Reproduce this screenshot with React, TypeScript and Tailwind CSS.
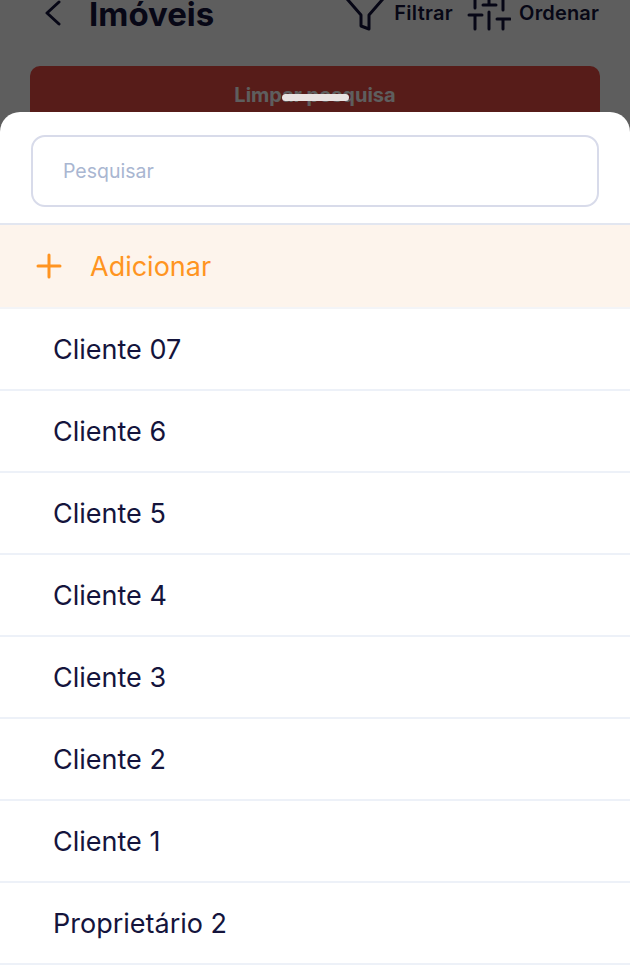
const rows = ["Cliente 07", "Cliente 6", "Cliente 5", "Cliente 4", "Cliente 3", "Cliente 2", "Cliente 1", "Proprietário 2"]

export default function App() {
  return (
    <div className="relative h-[975px] w-[630px] overflow-hidden bg-white font-['Inter',sans-serif] text-[#14143c]">
      {/* page behind the sheet */}
      <div className="flex h-[26px] items-center pl-[45px] pr-[31px]">
        <svg width="16" height="26" viewBox="0 0 16 26" fill="none" stroke="currentColor" strokeWidth="3" strokeLinecap="round" strokeLinejoin="round" className="mr-[28px]">
          <path d="M14 2 L2 13 L14 24" />
        </svg>
        <span className="mt-[2px] text-[33px] font-bold leading-[26px]">Imóveis</span>
        <div className="ml-auto flex items-center">
          <svg width="36" height="34" viewBox="0 0 36 34" fill="none" stroke="currentColor" strokeWidth="3" strokeLinecap="round" strokeLinejoin="round" className="mt-[8px] overflow-visible">
            <path d="M-1.5 -4 L15 15 L15 26 L23 29 L23 15 L39.5 -4" />
          </svg>
          <span className="ml-[12px] text-[20px] font-semibold leading-none tracking-[0.3px]">Filtrar</span>
          <svg width="44" height="34" viewBox="0 0 44 34" fill="none" stroke="currentColor" strokeWidth="3" strokeLinecap="round" className="ml-[14px] mt-[8px]">
            <path d="M8 -4 V8 M8 15 V29 M2 15 H15 M22 -4 V5 M22 12 V29 M16 5 H29 M36 -4 V10 M36 19 V29 M30 19 H43" />
          </svg>
          <span className="ml-[8px] text-[20px] font-semibold leading-none tracking-[0.15px]">Ordenar</span>
        </div>
      </div>
      <button className="ml-[30px] mt-[40px] flex h-[58px] w-[570px] items-center justify-center rounded-[10px] bg-[#eb4e44] text-[20px] font-bold text-white">
        Limpar pesquisa
      </button>

      {/* dim overlay */}
      <div className="absolute inset-0 bg-black/[0.63]" />
      <div className="absolute left-[282px] top-[94px] h-[7px] w-[67px] rounded-full bg-[#e8e2e1]" />

      {/* bottom sheet */}
      <div className="absolute inset-x-0 bottom-0 top-[112px] rounded-t-[20px] bg-white">
        <div className="px-[31px] pb-[16px] pt-[23px]">
          <div className="flex h-[72px] items-center rounded-[14px] border-2 border-[#d8dbea] pl-[30px] pt-[2px] text-[19.5px] text-[#a9b6d1]">
            Pesquisar
          </div>
        </div>
        <div className="flex h-[86px] items-center border-y-2 border-t-[#e2e6f0] border-b-[#f3f4f7] bg-[#fdf4ec] pl-[36px] text-[27px] text-[#ff9421]">
          <svg width="26" height="26" viewBox="0 0 26 26" fill="none" stroke="currentColor" strokeWidth="3" strokeLinecap="round">
            <path d="M13 2 V24 M2 13 H24" />
          </svg>
          <span className="ml-[28px] pt-[2px]">Adicionar</span>
        </div>
        {rows.map((name) => (
          <div key={name} className="flex h-[82px] items-center border-b-2 border-[#edf1f8] pl-[53px] pt-[2px] text-[27px]">
            {name}
          </div>
        ))}
      </div>
    </div>
  )
}
